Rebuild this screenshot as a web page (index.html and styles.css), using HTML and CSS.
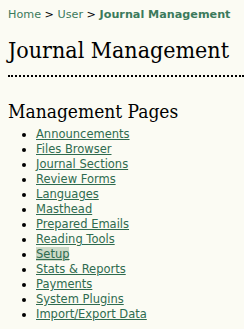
FILE: index.html
```html
<!DOCTYPE html>
<html lang="en">
<head>
    <meta charset="UTF-8">
    <title>Journal Management</title>
    <link rel="stylesheet" href="styles.css">
</head>
<body>
    <div class="breadcrumb">
        <a href="#">Home</a> &gt;
        <a href="#">User</a> &gt;
        <a href="#" class="current">Journal Management</a>
    </div>
    <h2 class="page-title">Journal Management</h2>
    <h3 class="section-title">Management Pages</h3>
    <ul class="plain">
        <li><a href="#">Announcements</a></li>
        <li><a href="#">Files Browser</a></li>
        <li><a href="#">Journal Sections</a></li>
        <li><a href="#">Review Forms</a></li>
        <li><a href="#">Languages</a></li>
        <li><a href="#">Masthead</a></li>
        <li><a href="#">Prepared Emails</a></li>
        <li><a href="#">Reading Tools</a></li>
        <li><a href="#" class="hover">Setup</a></li>
        <li><a href="#">Stats &amp; Reports</a></li>
        <li><a href="#">Payments</a></li>
        <li><a href="#">System Plugins</a></li>
        <li><a href="#">Import/Export Data</a></li>
    </ul>
</body>
</html>
```

FILE: styles.css
```css
body {
    margin: 0;
    padding: 8px 0 0 8px;
    background-color: #fbfbf3;
    font-family: "DejaVu Sans", Verdana, sans-serif;
    font-size: 11.5px;
    color: #000;
    overflow: hidden;
}

a {
    color: #2f6b4f;
}

.breadcrumb {
    font-size: 11.2px;
    line-height: 14px;
    height: 14px;
    white-space: nowrap;
}

.breadcrumb a {
    color: #3b7a5c;
    text-decoration: none;
}

.breadcrumb .current {
    font-weight: bold;
}

.page-title {
    margin: 15px 0 0 0;
    padding-bottom: 12px;
    font-family: "DejaVu Serif Condensed", "DejaVu Serif", Georgia, serif;
    font-size: 23px;
    font-weight: normal;
    line-height: 26px;
    white-space: nowrap;
    border-bottom: 2px dotted #000;
}

.section-title {
    margin: 23px 0 0 0;
    font-family: "DejaVu Serif Condensed", "DejaVu Serif", Georgia, serif;
    font-size: 19px;
    font-weight: normal;
    line-height: 22px;
}

.plain {
    margin: 5px 0 0 0;
    padding-left: 28px;
}

.plain li {
    line-height: 15px;
}

.plain a.hover {
    background-color: #cddac8;
}
```
